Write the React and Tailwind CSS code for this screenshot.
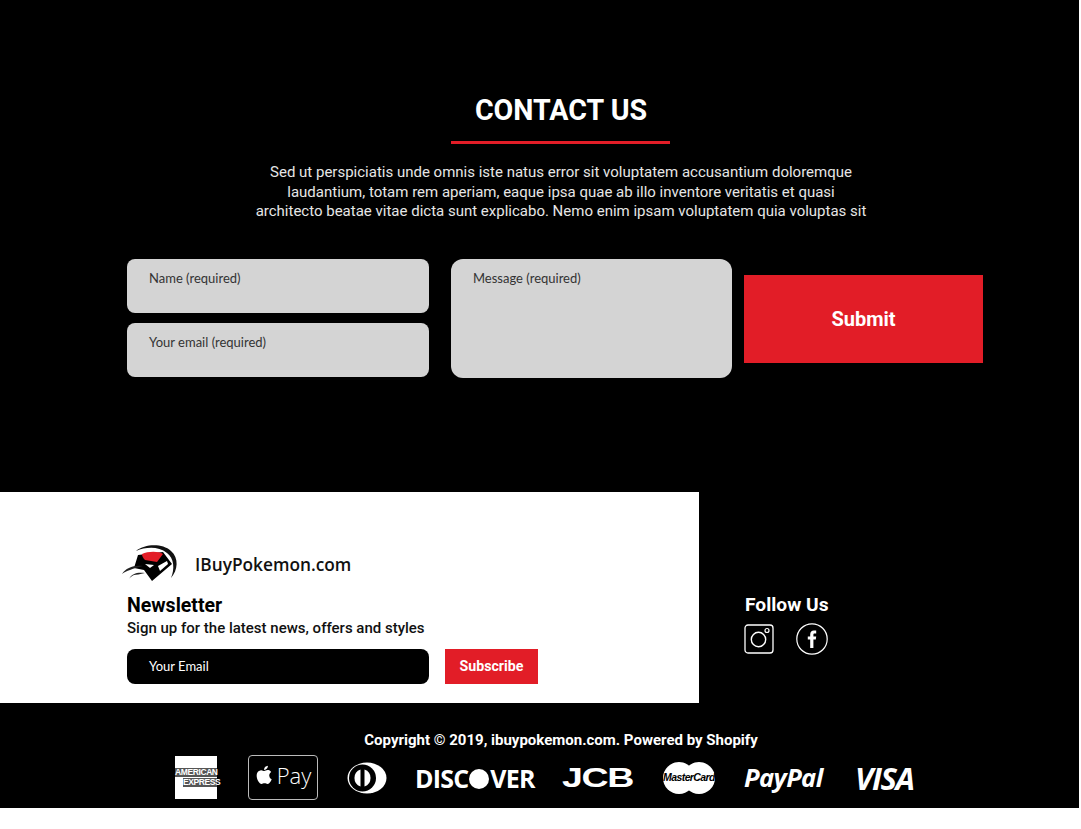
import React from 'react'

const roboto = "font-['Roboto',sans-serif]"

function Logo() {
  return (
    <svg width="58" height="40" viewBox="0 0 58 40" className="shrink-0">
      <path d="M15 8 C24 1 41 0 50 8 C58 15 57 27 50 35 C54 26 53 15 46 10 C37 3 25 4 15 8 Z" fill="#111" />
      <path d="M17 12 L42 9 L51 21 L31 38 L23 27 L13 25 Z" fill="#000" />
      <path d="M21 11 C27 8 38 8 42 11 L36 19 L24 17 C22 15 21 13 21 11 Z" fill="#e21d27" />
      <path d="M37 23 L46 18 L47 21 L39 28 Z" fill="#fff" />
      <path d="M24 21 L33 22 L29 25 Z" fill="#fff" />
      <path d="M1 31 C5 25 12 22 22 23 C16 24 12 26 9 27 C6 28 3 29 1 31 Z" fill="#222" />
      <path d="M8 36 C11 30 17 29 24 30 C19 31 15 32 13 32 C11 33 9 34 8 36 Z" fill="#222" />
    </svg>
  )
}

function Instagram() {
  return (
    <svg width="30" height="30" viewBox="0 0 30 30" fill="none" stroke="#fff">
      <rect x="1" y="1" width="28" height="28" rx="3" strokeWidth="1.3" />
      <circle cx="14.5" cy="15.5" r="7.2" strokeWidth="1.4" />
      <circle cx="23" cy="6.5" r="2" strokeWidth="1.2" />
    </svg>
  )
}

function Facebook() {
  return (
    <svg width="32" height="32" viewBox="0 0 32 32" fill="none">
      <circle cx="16" cy="16" r="15.2" stroke="#fff" strokeWidth="1.2" />
      <path d="M14.2 25 V16.6 H11.8 V13.6 H14.2 V11.4 C14.2 8.6 15.6 7.4 18 7.4 H20.2 V10.4 H18.8 C17.7 10.4 17.4 10.9 17.4 11.8 V13.6 H20.2 L19.8 16.6 H17.4 V25 Z" fill="#fff" />
    </svg>
  )
}

function AppleGlyph() {
  return (
    <svg width="20" height="22" viewBox="0 0 24 24" fill="#fff">
      <path d="M17.05 12.54c-.03-2.8 2.29-4.15 2.39-4.21-1.3-1.9-3.33-2.16-4.05-2.19-1.72-.17-3.36 1.01-4.23 1.01-.87 0-2.22-.99-3.65-.96-1.88.03-3.61 1.09-4.58 2.77-1.95 3.39-.5 8.41 1.4 11.16.93 1.35 2.04 2.86 3.49 2.8 1.4-.06 1.93-.9 3.63-.9 1.69 0 2.17.9 3.65.87 1.51-.03 2.46-1.37 3.38-2.72 1.07-1.56 1.5-3.08 1.53-3.16-.03-.01-2.93-1.12-2.96-4.47zM14.27 4.3c.77-.94 1.29-2.23 1.15-3.52-1.11.05-2.46.74-3.26 1.67-.71.83-1.34 2.15-1.17 3.41 1.24.1 2.5-.63 3.28-1.56z" />
    </svg>
  )
}

function Diners() {
  return (
    <svg width="40" height="32" viewBox="0 0 40 32">
      <ellipse cx="20" cy="16" rx="19.5" ry="15.5" fill="#fff" />
      <circle cx="15.5" cy="16" r="13.5" fill="#000" />
      <path d="M13.5 7.5 A9 9 0 0 0 13.5 24.5 Z" fill="#fff" />
      <path d="M17.5 7.5 A9 9 0 0 1 17.5 24.5 Z" fill="#fff" />
    </svg>
  )
}

function PaymentRow() {
  return (
    <div className="flex items-center h-[46px] pl-[175px]">
      <div className="w-[42px] h-[43px] bg-white flex flex-col justify-center font-['Liberation_Sans',sans-serif] font-bold text-[8.5px] leading-[9px] tracking-[-0.4px]">
        <span className="bg-[#555] text-white text-center">AMERICAN</span>
        <span className="bg-[#555] text-white text-right ml-[8px] mt-[1px]">EXPRESS</span>
      </div>
      <div className="ml-[31px] w-[70px] h-[45px] rounded border border-[#bbb] flex items-center justify-center gap-[2px] text-white">
        <span className="-mt-[5px]"><AppleGlyph /></span>
        <span className="font-['Open_Sans',sans-serif] font-light text-[22px] leading-none -mt-[5px]">Pay</span>
      </div>
      <div className="ml-[29px] mt-[2px]"><Diners /></div>
      <span className="ml-[28px] mt-[2px] w-[118px] whitespace-nowrap font-['Open_Sans',sans-serif] font-bold text-[25px] leading-none tracking-[-0.8px] text-white">DISC<span className="inline-block w-[20px] h-[20px] rounded-full bg-white align-[-1px] mx-[1px]"></span>VER</span>
      <span className="ml-[29px] mt-[2px] w-[71px] font-['Liberation_Sans',sans-serif] font-bold text-[28px] leading-none tracking-[-1px] text-white scale-x-[1.34] origin-left">JCB</span>
      <div className="relative ml-[30px] mt-[2px] w-[52px] h-[32px]">
        <span className="absolute left-0 top-0 w-[32px] h-[32px] rounded-full bg-white"></span>
        <span className="absolute right-0 top-0 w-[32px] h-[32px] rounded-full bg-white"></span>
        <span className="absolute inset-0 flex items-center justify-center font-['Liberation_Sans',sans-serif] font-bold italic text-[10.5px] tracking-[-0.6px] text-black">MasterCard</span>
      </div>
      <span className="ml-[29px] mt-[2px] w-[80px] font-['Open_Sans',sans-serif] font-bold italic text-[25.5px] leading-none tracking-[-0.6px] text-white">PayPal</span>
      <span className="ml-[31px] mt-[2px] font-['Open_Sans',sans-serif] font-bold italic text-[31px] leading-none tracking-[-1.4px] text-white">VISA</span>
    </div>
  )
}

export default function App() {
  return (
    <div className={`w-[1079px] h-[808px] bg-black ${roboto}`}>
      {/* contact */}
      <section className="h-[492px] pt-[93px]">
        <div className="flex flex-col items-center pl-[43px]">
          <h2 className="text-[28.6px] leading-[34px] font-bold text-white">CONTACT US</h2>
          <div className="w-[219px] h-[3px] bg-[#e21d27] mt-[14px] -ml-[2px]"></div>
          <p className="w-[640px] mt-[19px] text-center text-[15px] leading-[19.7px] text-[#e6e6e6]">
            Sed ut perspiciatis unde omnis iste natus error sit voluptatem accusantium doloremque<br />
            laudantium, totam rem aperiam, eaque ipsa quae ab illo inventore veritatis et quasi<br />
            architecto beatae vitae dicta sunt explicabo. Nemo enim ipsam voluptatem quia voluptas sit
          </p>
        </div>
        <div className="flex items-center mt-[37px] pl-[127px]">
          <div className="flex flex-col gap-[10px] w-[302px] self-start">
            <div className="h-[54px] rounded-lg bg-[#d4d4d4] pl-[22px] pt-[10px] font-['Lato',sans-serif] text-[13px] leading-[18px] text-[#333]">Name (required)</div>
            <div className="h-[54px] rounded-lg bg-[#d4d4d4] pl-[22px] pt-[10px] font-['Lato',sans-serif] text-[13px] leading-[18px] text-[#333]">Your email (required)</div>
          </div>
          <div className="ml-[22px] w-[281px] h-[119px] rounded-xl bg-[#d4d4d4] pl-[22px] pt-[10px] font-['Lato',sans-serif] text-[13px] leading-[18px] text-[#333]">Message (required)</div>
          <button className="ml-[12px] w-[239px] h-[88px] bg-[#e21d27] text-white font-bold text-[20px]">Submit</button>
        </div>
      </section>

      {/* newsletter + follow */}
      <section className="h-[211px] flex">
        <div className="w-[699px] bg-white pl-[127px] pt-[51px]">
          <div className="flex items-center -ml-[6px] h-[40px]">
            <Logo />
            <span className="ml-[16px] mt-[4px] font-['Open_Sans',sans-serif] font-semibold text-[17.3px] leading-none text-[#111]">IBuyPokemon.com</span>
          </div>
          <h3 className="mt-[10px] text-[19.5px] leading-[26px] font-bold text-black">Newsletter</h3>
          <p className="text-[15px] leading-[18px] font-medium text-[#111]">Sign up for the latest news, offers and styles</p>
          <div className="flex mt-[12px] gap-[16px]">
            <div className="w-[302px] h-[35px] rounded-lg bg-black pl-[22px] flex items-center font-['Lato',sans-serif] text-[13px] text-white">Your Email</div>
            <button className="w-[93px] h-[35px] pt-[1px] bg-[#e21d27] text-white font-bold text-[14.2px]">Subscribe</button>
          </div>
        </div>
        <div className="pl-[46px] pt-[101px]">
          <h3 className="text-[19.2px] leading-[24px] font-bold text-white">Follow Us</h3>
          <div className="flex items-center gap-[22px] mt-[6px] -ml-[1px]">
            <Instagram />
            <Facebook />
          </div>
        </div>
      </section>

      {/* footer */}
      <section className="h-[105px] pt-[28px]">
        <p className="pl-[43px] text-center text-[15px] leading-[18px] font-bold text-white">Copyright © 2019, ibuypokemon.com. Powered by Shopify</p>
        <div className="mt-[5px]"><PaymentRow /></div>
      </section>
    </div>
  )
}
